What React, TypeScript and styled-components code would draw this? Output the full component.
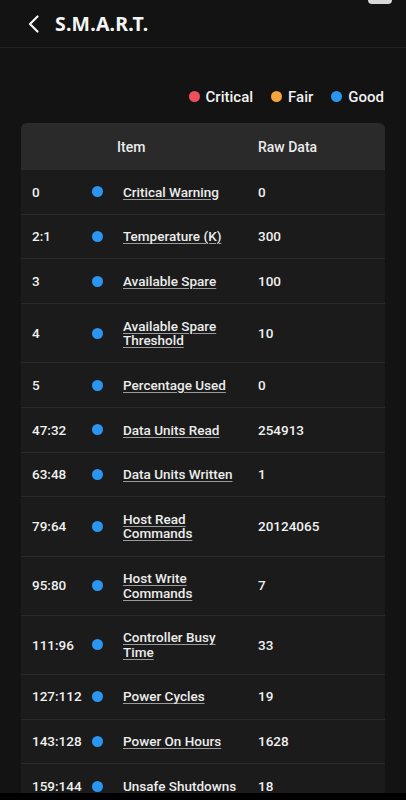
import React from "react";
import styled, { createGlobalStyle } from "styled-components";

const GlobalStyle = createGlobalStyle`
  html, body {
    margin: 0;
    padding: 0;
    background: #131313;
    font-family: Roboto, "Noto Sans", sans-serif;
    color: #f2f2f2;
  }
`;

const Screen = styled.div`
  position: relative;
  width: 406px;
  height: 800px;
  overflow: hidden;
  background: #131313;
`;

const StatusNub = styled.span`
  position: absolute;
  top: -4px;
  right: 14px;
  width: 24px;
  height: 8px;
  border-radius: 4px;
  background: #d8d8d8;
`;

const TopBar = styled.header`
  display: flex;
  align-items: center;
  gap: 13px;
  height: 48px;
  padding: 0 0 0 26px;
  border-bottom: 1px solid #222;
  box-sizing: border-box;
`;

const BackButton = styled.button`
  display: flex;
  align-items: center;
  padding: 0;
  border: 0;
  background: none;
  color: #f5f5f5;
  cursor: pointer;
`;

const Title = styled.h1`
  margin: 0;
  font-family: "Noto Sans", sans-serif;
  font-size: 19.5px;
  font-weight: 700;
  letter-spacing: 0.2px;
  color: #f5f5f5;
`;

const Legend = styled.div`
  display: flex;
  justify-content: flex-end;
  gap: 18px;
  padding: 22px 22px 0 0;
  height: 75px;
  box-sizing: border-box;
`;

const LegendItem = styled.span`
  display: flex;
  align-items: center;
  gap: 6px;
  font-size: 15px;
  line-height: 18px;
  font-weight: 500;
  color: #f2f2f2;
`;

const Dot = styled.span<{ $color: string; $size?: number }>`
  display: inline-block;
  width: ${(p) => p.$size ?? 11}px;
  height: ${(p) => p.$size ?? 11}px;
  border-radius: 50%;
  background: ${(p) => p.$color};
  flex-shrink: 0;
`;

const Card = styled.section`
  margin: 0 21px;
  border-radius: 6px;
  overflow: hidden;
  background: #1b1b1b;
`;

const cols = "56px 35px 135px 1fr";

const HeadRow = styled.div`
  display: grid;
  grid-template-columns: ${cols};
  align-items: center;
  height: 47px;
  padding-left: 11px;
  background: #2a2a2a;
  font-size: 14px;
  font-weight: 500;
  color: #ececec;
`;

const HeadCell = styled.span<{ $col: number; $shift?: number }>`
  grid-column: ${(p) => p.$col};
  margin-left: ${(p) => p.$shift ?? 0}px;
`;

const Row = styled.div`
  display: grid;
  grid-template-columns: ${cols};
  align-items: center;
  padding: 14.6px 0 14.6px 11px;
  border-top: 1px solid #2a2a2a;
  font-size: 13.5px;
  line-height: 14.5px;
  font-weight: 500;
  color: #f0f0f0;
  &:first-of-type {
    border-top: 0;
  }
`;

const DotCell = styled.span`
  display: flex;
  padding-left: 4px;
`;

const ItemCell = styled.span`
  padding-right: 16px;
`;

const ItemLink = styled.a`
  color: #ececec;
  text-decoration: underline;
  text-decoration-color: #9a9a9a;
  text-underline-offset: 2px;
`;

const BottomBar = styled.div`
  position: absolute;
  left: 0;
  right: 0;
  bottom: 0;
  height: 7px;
  background: #000;
`;

const COLORS = { critical: "#ef4f58", fair: "#f4a53d", good: "#2b96f2" };

const rows: [string, string, string][] = [
  ["0", "Critical Warning", "0"],
  ["2:1", "Temperature (K)", "300"],
  ["3", "Available Spare", "100"],
  ["4", "Available Spare Threshold", "10"],
  ["5", "Percentage Used", "0"],
  ["47:32", "Data Units Read", "254913"],
  ["63:48", "Data Units Written", "1"],
  ["79:64", "Host Read Commands", "20124065"],
  ["95:80", "Host Write Commands", "7"],
  ["111:96", "Controller Busy Time", "33"],
  ["127:112", "Power Cycles", "19"],
  ["143:128", "Power On Hours", "1628"],
  ["159:144", "Unsafe Shutdowns", "18"],
];

const App = () => {
  return (
    <Screen>
      <GlobalStyle />
      <StatusNub />
      <TopBar>
        <BackButton aria-label="Back">
          <svg width="16" height="18" viewBox="0 0 16 18" fill="none">
            <path
              d="M11.5 1.5 L4 9 L11.5 16.5"
              stroke="#f5f5f5"
              strokeWidth="2.2"
              strokeLinecap="round"
              strokeLinejoin="round"
            />
          </svg>
        </BackButton>
        <Title>S.M.A.R.T.</Title>
      </TopBar>

      <Legend>
        <LegendItem>
          <Dot $color={COLORS.critical} />
          Critical
        </LegendItem>
        <LegendItem>
          <Dot $color={COLORS.fair} />
          Fair
        </LegendItem>
        <LegendItem>
          <Dot $color={COLORS.good} />
          Good
        </LegendItem>
      </Legend>

      <Card>
        <HeadRow>
          <HeadCell $col={3} $shift={-6}>
            Item
          </HeadCell>
          <HeadCell $col={4}>Raw Data</HeadCell>
        </HeadRow>
        <div>
          {rows.map(([id, name, raw]) => (
            <Row key={id}>
              <span>{id}</span>
              <DotCell>
                <Dot $color={COLORS.good} />
              </DotCell>
              <ItemCell>
                <ItemLink>{name}</ItemLink>
              </ItemCell>
              <span>{raw}</span>
            </Row>
          ))}
        </div>
      </Card>

      <BottomBar />
    </Screen>
  );
};

export default App;
